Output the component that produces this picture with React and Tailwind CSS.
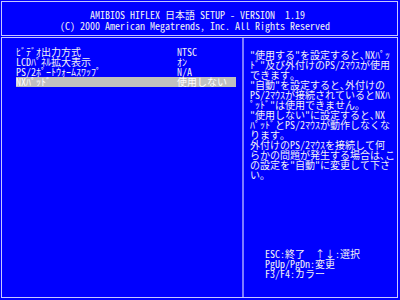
import React from 'react';

const FONT = { fontFamily: '"Noto Sans Mono CJK JP", "Liberation Mono", "Noto Sans CJK JP", monospace' };

const items = [
    { label: 'ﾋﾞﾃﾞｵ出力方式', value: 'NTSC' },
    { label: 'LCDﾊﾟﾈﾙ拡大表示', value: 'ｵﾝ' },
    { label: 'PS/2ﾎﾟｰﾄｳｫｰﾑｽﾜｯﾌﾟ', value: 'N/A' },
    { label: 'NXﾊﾟｯﾄﾞ', value: '使用しない', selected: true },
];

const helpLines = [
    '"使用する"を設定すると､NXﾊﾟｯ',
    'ﾄﾞ"及び外付けのPS/2ﾏｳｽが使用',
    'できます｡',
    '"自動"を設定すると､外付けの',
    'PS/2ﾏｳｽが接続されているとNXﾊ',
    'ﾟｯﾄﾞ"は使用できません｡',
    '"使用しない"に設定すると､NX',
    'ﾊﾟｯﾄﾞとPS/2ﾏｳｽが動作しなくな',
    'ります｡',
    '外付けのPS/2ﾏｳｽを接続して何',
    'らかの問題が発生する場合は､こ',
    'の設定を"自動"に変更して下さ',
    'い｡',
];

const SetupRow = ({ label, value, selected }) => (
    <div className={`ml-[14px] w-[220px] h-[10px] flex ${selected ? 'bg-[#c0c0c0] text-white' : 'text-[#f4f4f4]'}`}>
        <span className="w-[161px] whitespace-nowrap">{label}</span>
        <span className="whitespace-nowrap">{value}</span>
    </div>
);

export default function App() {
    return (
        <div style={FONT} className="w-[400px] h-[300px] bg-[#0000ff] pt-px pl-px flex flex-col gap-px text-[10px] leading-[10px] text-[#f4f4f4] overflow-hidden">
            {/* ヘッダー */}
            <div className="w-[397px] h-[35px] shrink-0 border border-[#c8c8ff] pt-[7px] leading-[11px] whitespace-pre">
                <div className="pl-[88px]">AMIBIOS HIFLEX 日本語 SETUP - VERSION  1.19</div>
                <div className="pl-[58px]">(C) 2000 American Megatrends, Inc. All Rights Reserved</div>
            </div>

            {/* メイン */}
            <div className="w-[397px] h-[261px] shrink-0 border border-[#c8c8ff] flex">
                <div className="w-[240px] pt-[9px]">
                    {items.map(it => <SetupRow key={it.label} {...it} />)}
                </div>
                <div className="w-[2px] bg-[#7c7cff]" />
                <div className="flex-1 flex flex-col">
                    <div className="pl-[6px] pt-[12px] whitespace-pre">
                        {helpLines.map((l, i) => <div key={i} className="h-[10px]">{l}</div>)}
                    </div>
                    <div className="mt-auto pl-[21px] pb-[18px] whitespace-pre">
                        <div className="h-[10px]">ESC:終了  ↑↓:選択</div>
                        <div className="h-[10px]">PgUp/PgDn:変更</div>
                        <div className="h-[10px]">F3/F4:カラー</div>
                    </div>
                </div>
            </div>
        </div>
    );
}
